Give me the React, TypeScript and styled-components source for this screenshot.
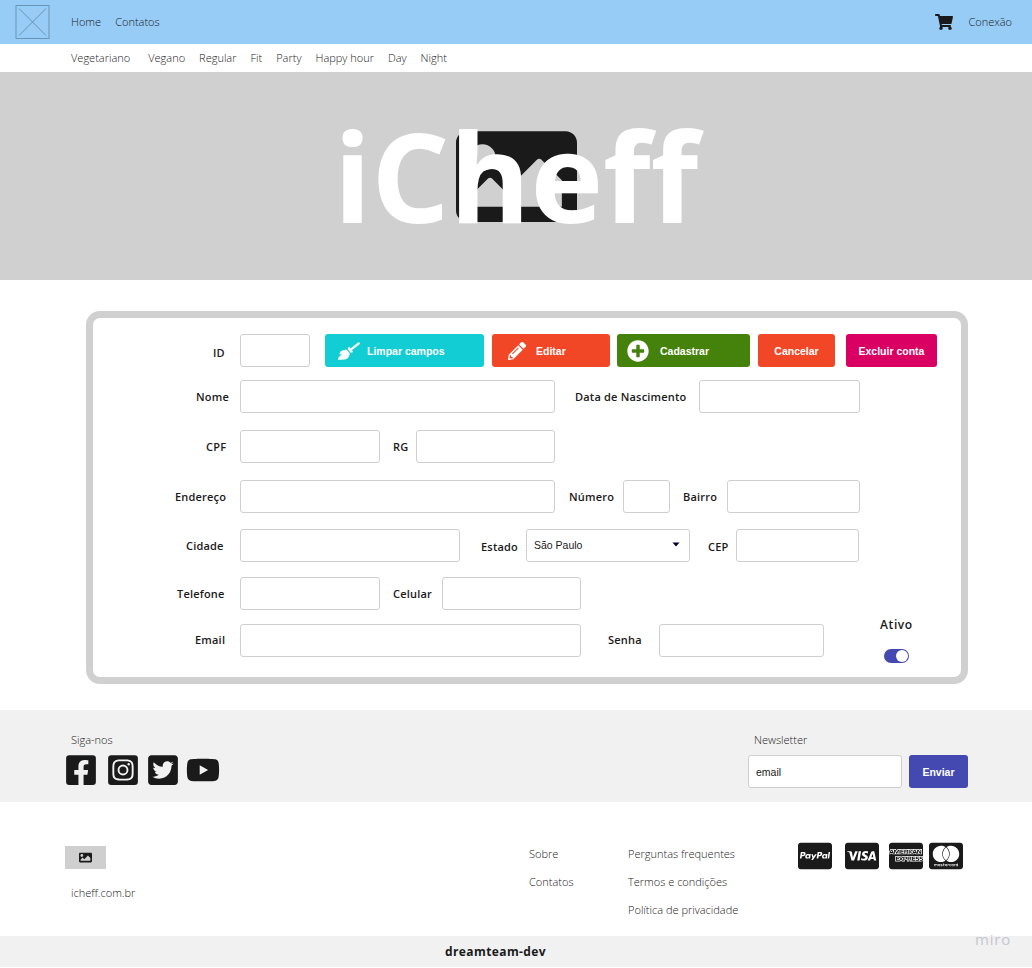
import React from "react";
import styled, { createGlobalStyle } from "styled-components";
import {
  FaShoppingCart,
  FaImage,
  FaBroom,
  FaPencilAlt,
  FaPlusCircle,
  FaFacebookSquare,
  FaInstagramSquare,
  FaTwitterSquare,
  FaYoutube,
  FaCcPaypal,
  FaCcVisa,
  FaCcAmex,
  FaCcMastercard,
} from "react-icons/fa";

const Global = createGlobalStyle`
  * { box-sizing: border-box; }
  body {
    margin: 0;
    background: #fff;
    color: #1a1a1a;
    font-family: "Open Sans", "Noto Sans", sans-serif;
    font-size: 11px;
    line-height: 16px;
  }
  svg { display: block; }
`;

const Page = styled.div`
  position: relative;
  width: 1032px;
  height: 968px;
  overflow: hidden;
  display: flex;
  flex-direction: column;
`;

const TopBar = styled.header`
  height: 44px;
  flex: none;
  background: #96ccf6;
  display: flex;
  align-items: center;
  padding: 0 20px 0 15px;
`;

const LogoBox = styled.svg`
  width: 35px;
  height: 35px;
`;

const TextLink = styled.a<{ $ml?: number; $ls?: number }>`
  margin-left: ${(p) => p.$ml ?? 0}px;
  letter-spacing: ${(p) => p.$ls ?? 0}px;
  font-weight: 300;
  white-space: nowrap;
`;

const Session = styled.div`
  margin-left: auto;
  display: flex;
  align-items: center;
  gap: 15px;
`;

const SubNav = styled.nav`
  height: 28px;
  flex: none;
  display: flex;
  align-items: center;
  padding-left: 71px;
`;

const Hero = styled.section`
  height: 208px;
  flex: none;
  background: #d0d0d0;
  display: grid;
  place-items: center;
`;

const HeroIcon = styled.div`
  grid-area: 1 / 1;
  margin: 0 0 0 1px;
`;

const HeroTitle = styled.h1`
  grid-area: 1 / 1;
  z-index: 1;
  margin: 0;
  padding-bottom: 1px;
  font-size: 123px;
  line-height: 168px;
  font-weight: 700;
  color: #fff;
`;

const Form = styled.form`
  flex: none;
  width: 882px;
  height: 373px;
  margin: 31px 0 0 86px;
  border: 7px solid #d0d0d0;
  border-radius: 14px;
`;

const Row = styled.div<{ $mt: number; $top?: boolean }>`
  display: flex;
  align-items: ${(p) => (p.$top ? "flex-start" : "center")};
  margin-top: ${(p) => p.$mt}px;
`;

const Label = styled.label<{ $ml: number; $w: number; $mt?: number }>`
  flex: none;
  margin-left: ${(p) => p.$ml}px;
  margin-top: ${(p) => p.$mt ?? 0}px;
  width: ${(p) => p.$w}px;
  font-weight: 600;
  letter-spacing: 0.2px;
  white-space: nowrap;
`;

const Field = styled.input<{ $w: number }>`
  flex: none;
  width: ${(p) => p.$w}px;
  height: 33px;
  padding: 0 7px;
  border: 1px solid #cfcfcf;
  border-radius: 3px;
  outline: 0;
  background: #fff;
  color: #1a1a1a;
  font: 10.5px "Liberation Sans", Arial, sans-serif;
`;

const Select = styled.div`
  flex: none;
  width: 164px;
  height: 33px;
  padding: 0 9px 2px 7px;
  border: 1px solid #cfcfcf;
  border-radius: 3px;
  display: flex;
  align-items: center;
  justify-content: space-between;
  font: 10.5px "Liberation Sans", Arial, sans-serif;
`;

const Button = styled.button<{ $w: number; $bg: string; $ml?: number; $mt?: number; $pl?: number; $gap?: number }>`
  flex: none;
  width: ${(p) => p.$w}px;
  height: 33px;
  margin: ${(p) => p.$mt ?? 0}px 0 0 ${(p) => p.$ml ?? 0}px;
  padding: 0 0 0 ${(p) => p.$pl ?? 0}px;
  border: 0;
  border-radius: 3px;
  background: ${(p) => p.$bg};
  color: #fff;
  display: flex;
  align-items: center;
  justify-content: ${(p) => (p.$pl ? "flex-start" : "center")};
  gap: ${(p) => p.$gap ?? 0}px;
  font: bold 10.5px "Liberation Sans", Arial, sans-serif;
  white-space: nowrap;
`;

const ActiveBox = styled.div`
  margin-left: 56px;
  height: 46px;
  display: flex;
  flex-direction: column;
  align-items: center;
  justify-content: space-between;
  font-size: 12px;
  font-weight: 600;
  letter-spacing: 0.6px;
`;

const Toggle = styled.span`
  width: 25px;
  height: 14px;
  border-radius: 7px;
  background: #4349b0;
  display: flex;
  justify-content: flex-end;
  padding: 1px;
`;

const Knob = styled.i`
  width: 12px;
  height: 12px;
  border-radius: 50%;
  background: #fff;
`;

const SocialBand = styled.section`
  flex: none;
  height: 92px;
  margin-top: 26px;
  padding: 22px 64px 0 66px;
  background: #f1f1f1;
  display: flex;
  justify-content: space-between;
`;

const BandGroup = styled.div`
  display: flex;
  flex-direction: column;
`;

const BandTitle = styled.span<{ $ml: number }>`
  margin-left: ${(p) => p.$ml}px;
  font-weight: 300;
`;

const SocialIcons = styled.div`
  display: flex;
  align-items: center;
  margin-top: 5px;
  height: 34px;
`;

const IconSlot = styled.span<{ $ml: number }>`
  margin-left: ${(p) => p.$ml}px;
`;

const SubscribeLine = styled.div`
  display: flex;
  margin-top: 7px;
`;

const Footer = styled.footer`
  flex: none;
  height: 134px;
  display: flex;
  align-items: flex-start;
  padding-left: 65px;
`;

const Brand = styled.div`
  width: 464px;
  padding-top: 44px;
  display: flex;
  flex-direction: column;
  gap: 16px;
`;

const BrandImage = styled.div`
  width: 41px;
  height: 23px;
  background: #cfcfcf;
  display: grid;
  place-items: center;
`;

const LinkColumn = styled.div<{ $w: number }>`
  width: ${(p) => p.$w}px;
  padding-top: 44px;
  display: flex;
  flex-direction: column;
  gap: 12px;
`;

const Cards = styled.div`
  display: flex;
  padding-top: 37px;
`;

const Credits = styled.div`
  flex: none;
  height: 31px;
  padding-left: 445px;
  background: #f1f1f1;
  font-size: 12px;
  font-weight: 700;
  line-height: 31px;
  letter-spacing: 0.4px;
`;

const Watermark = styled.span`
  position: absolute;
  left: 975px;
  top: 929px;
  font-size: 15px;
  line-height: 20px;
  letter-spacing: 0.8px;
  color: #c6c6d0;
`;

export default function App() {
  return (
    <>
      <Global />
      <Page>
        <TopBar>
          <LogoBox viewBox="0 0 35 35" fill="none" stroke="#6b94b5" strokeWidth="1">
            <rect x="1" y="0.5" width="33" height="33" />
            <path d="M4 3.5l27 27M31 3.5l-27 27" />
          </LogoBox>
          <TextLink $ml={21}>Home</TextLink>
          <TextLink $ml={14}>Contatos</TextLink>
          <Session>
            <FaShoppingCart size={18} />
            <TextLink>Conexão</TextLink>
          </Session>
        </TopBar>
        <SubNav>
          <TextLink>Vegetariano</TextLink>
          <TextLink $ml={18}>Vegano</TextLink>
          <TextLink $ml={14}>Regular</TextLink>
          <TextLink $ml={14}>Fit</TextLink>
          <TextLink $ml={14}>Party</TextLink>
          <TextLink $ml={14}>Happy hour</TextLink>
          <TextLink $ml={14}>Day</TextLink>
          <TextLink $ml={14}>Night</TextLink>
        </SubNav>
        <Hero>
          <HeroIcon>
            <FaImage size={121} />
          </HeroIcon>
          <HeroTitle>iCheff</HeroTitle>
        </Hero>
        <Form>
          <Row $mt={16} $top>
            <Label $ml={120} $w={27} $mt={11}>ID</Label>
            <Field $w={70} style={undefined} />
            <Button type="button" $w={159} $bg="#13cdd4" $ml={15} $pl={13} $gap={7}>
              <FaBroom size={22} />
              Limpar campos
            </Button>
            <Button type="button" $w={118} $bg="#f24726" $ml={8} $pl={16} $gap={10}>
              <FaPencilAlt size={18} />
              Editar
            </Button>
            <Button type="button" $w={133} $bg="#45820c" $ml={7} $pl={10} $gap={11}>
              <FaPlusCircle size={22} />
              Cadastrar
            </Button>
            <Button type="button" $w={77} $bg="#f24726" $ml={8}>Cancelar</Button>
            <Button type="button" $w={91} $bg="#da0063" $ml={11}>Excluir conta</Button>
          </Row>
          <Row $mt={13}>
            <Label $ml={103} $w={44}>Nome</Label>
            <Field $w={315} />
            <Label $ml={20} $w={124}>Data de Nascimento</Label>
            <Field $w={161} />
          </Row>
          <Row $mt={17}>
            <Label $ml={113} $w={34}>CPF</Label>
            <Field $w={140} />
            <Label $ml={13} $w={23}>RG</Label>
            <Field $w={139} />
          </Row>
          <Row $mt={17}>
            <Label $ml={82} $w={65}>Endereço</Label>
            <Field $w={315} />
            <Label $ml={14} $w={54}>Número</Label>
            <Field $w={47} />
            <Label $ml={13} $w={44}>Bairro</Label>
            <Field $w={133} />
          </Row>
          <Row $mt={16}>
            <Label $ml={93} $w={54}>Cidade</Label>
            <Field $w={220} />
            <Label $ml={21} $w={45} $mt={3}>Estado</Label>
            <Select>
              São Paulo
              <svg width="8" height="5" viewBox="0 0 8 5">
                <path d="M0.5 0.5h7L4 4.5z" fill="#050038" />
              </svg>
            </Select>
            <Label $ml={18} $w={28} $mt={3}>CEP</Label>
            <Field $w={123} />
          </Row>
          <Row $mt={15}>
            <Label $ml={84} $w={63}>Telefone</Label>
            <Field $w={140} />
            <Label $ml={13} $w={49}>Celular</Label>
            <Field $w={139} />
          </Row>
          <Row $mt={7}>
            <Label $ml={102} $w={45}>Email</Label>
            <Field $w={341} />
            <Label $ml={27} $w={51}>Senha</Label>
            <Field $w={165} />
            <ActiveBox>
              Ativo
              <Toggle>
                <Knob />
              </Toggle>
            </ActiveBox>
          </Row>
        </Form>
        <SocialBand>
          <BandGroup>
            <BandTitle $ml={5}>Siga-nos</BandTitle>
            <SocialIcons>
              <IconSlot $ml={-2}><FaFacebookSquare size={34} /></IconSlot>
              <IconSlot $ml={8}><FaInstagramSquare size={34} /></IconSlot>
              <IconSlot $ml={6}><FaTwitterSquare size={34} /></IconSlot>
              <IconSlot $ml={6}><FaYoutube size={34} /></IconSlot>
            </SocialIcons>
          </BandGroup>
          <BandGroup>
            <BandTitle $ml={6}>Newsletter</BandTitle>
            <SubscribeLine>
              <Field $w={154} defaultValue="email" />
              <Button type="button" $w={59} $bg="#4349b0" $ml={7}>Enviar</Button>
            </SubscribeLine>
          </BandGroup>
        </SocialBand>
        <Footer>
          <Brand>
            <BrandImage>
              <FaImage size={13} />
            </BrandImage>
            <TextLink $ml={6}>icheff.com.br</TextLink>
          </Brand>
          <LinkColumn $w={99}>
            <TextLink>Sobre</TextLink>
            <TextLink>Contatos</TextLink>
          </LinkColumn>
          <LinkColumn $w={170}>
            <TextLink>Perguntas frequentes</TextLink>
            <TextLink>Termos e condições</TextLink>
            <TextLink>Política de privacidade</TextLink>
          </LinkColumn>
          <Cards>
            <IconSlot $ml={0}><FaCcPaypal size={34} /></IconSlot>
            <IconSlot $ml={13}><FaCcVisa size={34} /></IconSlot>
            <IconSlot $ml={10}><FaCcAmex size={34} /></IconSlot>
            <IconSlot $ml={6}><FaCcMastercard size={34} /></IconSlot>
          </Cards>
        </Footer>
        <Credits>dreamteam-dev</Credits>
        <Watermark>miro</Watermark>
      </Page>
    </>
  );
}
